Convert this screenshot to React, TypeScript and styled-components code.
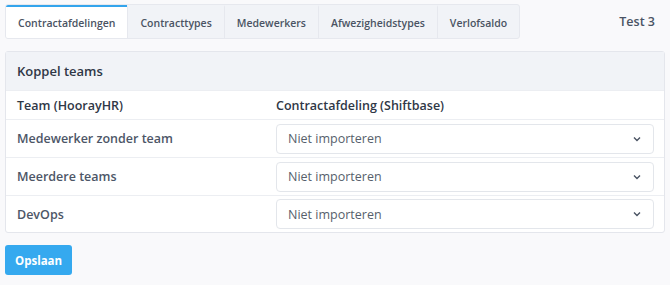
import styled, { createGlobalStyle } from "styled-components";

const GlobalStyle = createGlobalStyle`
  body {
    margin: 0;
    background: #f9f9fb;
    font-family: "Open Sans", "Noto Sans", sans-serif;
    color: #3d4555;
  }
`;

const Page = styled.div`
  padding: 4px 5px 0 5px;
`;

const TopBar = styled.div`
  display: flex;
  align-items: center;
  justify-content: space-between;
`;

const Tabs = styled.div`
  display: flex;
  background: #f1f3f7;
  border: 1px solid #e6e8ee;
  border-radius: 3px;
  overflow: hidden;
`;

const Tab = styled.div<{ active?: boolean }>`
  height: 31px;
  padding: 0 12px;
  display: flex;
  align-items: center;
  font-size: 10.5px;
  font-weight: 600;
  color: #4a5363;
  background: ${({ active }) => (active ? "#ffffff" : "transparent")};
  border-top: 2px solid ${({ active }) => (active ? "#33a4ec" : "transparent")};
  border-left: ${({ active }) => (active ? "none" : "1px solid #e6e8ee")};
  &:first-child {
    border-left: none;
  }
`;

const Account = styled.div`
  font-size: 12.5px;
  font-weight: 600;
  color: #4a5363;
  padding-right: 10px;
`;

const Card = styled.div`
  margin-top: 12px;
  background: #ffffff;
  border: 1px solid #e4e6ec;
  border-radius: 3px;
`;

const CardHeader = styled.div`
  height: 38px;
  display: flex;
  align-items: center;
  padding: 0 11px;
  background: #f1f3f7;
  font-size: 13px;
  font-weight: 600;
  color: #2f3746;
`;

const Row = styled.div<{ head?: boolean }>`
  display: grid;
  grid-template-columns: 259px 1fr;
  align-items: center;
  height: ${({ head }) => (head ? "28px" : "37px")};
  border-top: 1px solid #eceef2;
  padding: 0 10px 0 11px;
  &:last-child {
    height: 36px;
  }
`;

const HeadCell = styled.div`
  font-size: 12.5px;
  font-weight: 600;
  color: #2f3746;
`;

const Label = styled.div`
  font-size: 12.5px;
  font-weight: 600;
  color: #4d5667;
`;

const SelectBox = styled.div`
  height: 28px;
  border: 1px solid #e3e6eb;
  border-radius: 4px;
  display: flex;
  align-items: center;
  justify-content: space-between;
  padding: 0 12px 0 11px;
  font-size: 12.5px;
  color: #575f6c;
`;

const Chevron = () => (
  <svg width="8" height="6" viewBox="0 0 8 6">
    <path d="M1 1.5 L4 4.5 L7 1.5" fill="none" stroke="#4a5363" strokeWidth="1.4" />
  </svg>
);

const SaveButton = styled.button`
  margin-top: 12px;
  height: 30px;
  padding: 0 10px;
  border: none;
  border-radius: 3px;
  background: #35a9ef;
  color: #ffffff;
  font-family: "Open Sans", sans-serif;
  font-size: 11.5px;
  font-weight: 700;
`;

const tabs = ["Contractafdelingen", "Contracttypes", "Medewerkers", "Afwezigheidstypes", "Verlofsaldo"];
const teams = ["Medewerker zonder team", "Meerdere teams", "DevOps"];

export default function App() {
  return (
    <>
      <GlobalStyle />
      <Page>
        <TopBar>
          <Tabs>
            {tabs.map((t, i) => (
              <Tab key={t} active={i === 0}>
                {t}
              </Tab>
            ))}
          </Tabs>
          <Account>Test 3</Account>
        </TopBar>
        <Card>
          <CardHeader>Koppel teams</CardHeader>
          <Row head>
            <HeadCell>Team (HoorayHR)</HeadCell>
            <HeadCell>Contractafdeling (Shiftbase)</HeadCell>
          </Row>
          {teams.map((team) => (
            <Row key={team}>
              <Label>{team}</Label>
              <SelectBox>
                Niet importeren
                <Chevron />
              </SelectBox>
            </Row>
          ))}
        </Card>
        <SaveButton>Opslaan</SaveButton>
      </Page>
    </>
  );
}
